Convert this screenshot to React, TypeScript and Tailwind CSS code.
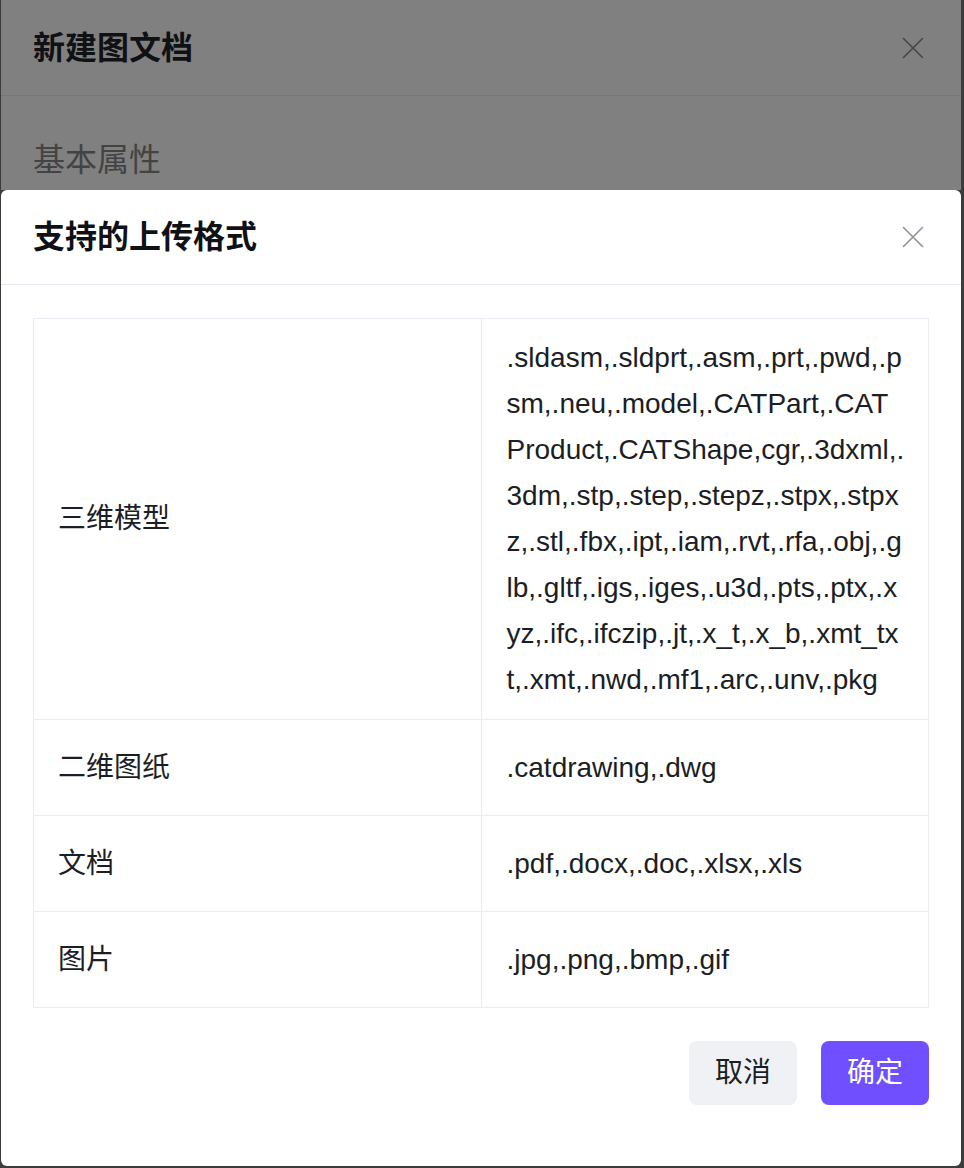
import React from "react";

const font = { fontFamily: '"Liberation Sans", "Noto Sans CJK SC", Arial, sans-serif' };

const rows: { name: string; lines: string[] }[] = [
  {
    name: "三维模型",
    lines: [
      ".sldasm,.sldprt,.asm,.prt,.pwd,.p",
      "sm,.neu,.model,.CATPart,.CAT",
      "Product,.CATShape,cgr,.3dxml,.",
      "3dm,.stp,.step,.stepz,.stpx,.stpx",
      "z,.stl,.fbx,.ipt,.iam,.rvt,.rfa,.obj,.g",
      "lb,.gltf,.igs,.iges,.u3d,.pts,.ptx,.x",
      "yz,.ifc,.ifczip,.jt,.x_t,.x_b,.xmt_tx",
      "t,.xmt,.nwd,.mf1,.arc,.unv,.pkg",
    ],
  },
  { name: "二维图纸", lines: [".catdrawing,.dwg"] },
  { name: "文档", lines: [".pdf,.docx,.doc,.xlsx,.xls"] },
  { name: "图片", lines: [".jpg,.png,.bmp,.gif"] },
];

function CloseIcon({ color }: { color: string }) {
  return (
    <svg width="24" height="24" viewBox="0 0 24 24" fill="none">
      <path d="M2.5 2.5 L21.5 21.5 M21.5 2.5 L2.5 21.5" stroke={color} strokeWidth="1.6" strokeLinecap="round" />
    </svg>
  );
}

export default function App() {
  return (
    <div className="w-[964px] h-[1168px] bg-[#3c3c3c] flex overflow-hidden" style={font}>
      <div className="ml-[1px] w-[960px] flex flex-col">
        {/* background dialog under mask */}
        <div className="h-[190px] bg-[#808080] flex flex-col shrink-0">
          <div className="h-[96px] flex items-center justify-between pl-[32px] pr-[36px] border-b border-[#77767d]">
            <span className="text-[32px] font-bold text-[#101114] leading-none">新建图文档</span>
            <CloseIcon color="#45464a" />
          </div>
          <div className="mt-[40px] pl-[32px] text-[32px] leading-[48px] text-[#434343]">基本属性</div>
        </div>

        {/* foreground dialog */}
        <div className="flex-1 mb-[2px] bg-white rounded-t-[6px] rounded-b-[6px] flex flex-col">
          <div className="h-[95px] flex items-center justify-between pl-[32px] pr-[36px] border-b border-[#e5e8ee] shrink-0">
            <span className="text-[32px] font-bold text-[#0f1115] leading-none">支持的上传格式</span>
            <CloseIcon color="#8c9099" />
          </div>
          <div className="px-[32px] pt-[33px]">
            <table className="w-full table-fixed border-collapse border border-[#e8ebf1] text-[28px] text-[#1b1e24]">
              <tbody>
                {rows.map((r, i) => (
                  <tr key={r.name} className={i === 0 ? "" : "h-[96px]"}>
                    <td className="border border-[#e8ebf1] pl-6 pr-4 align-middle leading-[46px]">{r.name}</td>
                    <td className={`border border-[#e8ebf1] pl-[25px] pr-0 align-middle leading-[46px] whitespace-nowrap ${i === 0 ? "py-4" : ""}`}>
                      {r.lines.map((l, j) => (
                        <div key={j}>{l}</div>
                      ))}
                    </td>
                  </tr>
                ))}
              </tbody>
            </table>
            <div className="mt-[33px] flex justify-end gap-6">
              <button className="w-[108px] h-[64px] rounded-[8px] bg-[#f0f1f5] text-[28px] text-[#1b1e24]">取消</button>
              <button className="w-[108px] h-[64px] rounded-[8px] bg-[#6f4fff] text-[28px] text-white">确定</button>
            </div>
          </div>
        </div>
      </div>
    </div>
  );
}
